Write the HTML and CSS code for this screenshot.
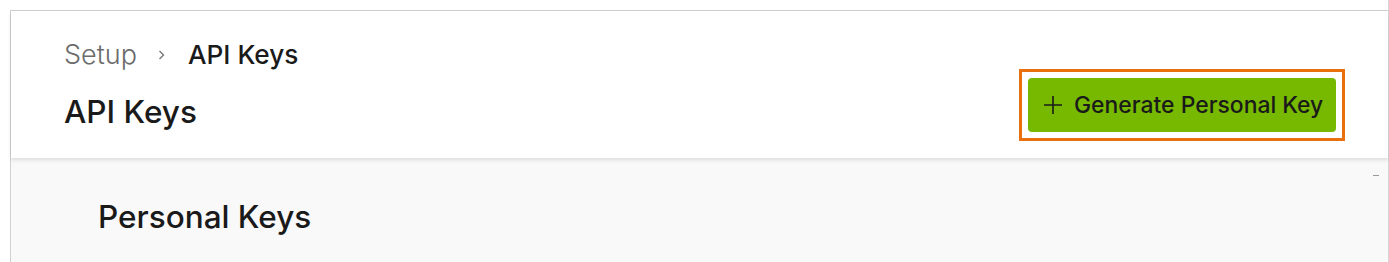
FILE: index.html
```html
<!DOCTYPE html>
<html>
<head>
<meta charset="utf-8">
<link rel="stylesheet" href="styles.css">
</head>
<body>
<div class="page">
  <div class="frame">
    <header class="header">
      <div class="titles">
        <nav class="crumbs">
          <span class="crumb">Setup</span>
          <svg class="chev" width="8" height="12" viewBox="0 0 8 12"><path d="M1.5 2l4 4-4 4" fill="none" stroke="#777" stroke-width="1.4"/></svg>
          <span class="crumb current">API Keys</span>
        </nav>
        <h1 class="title">API Keys</h1>
      </div>
      <div class="highlight">
        <button class="btn">
          <svg class="plus" width="18" height="18" viewBox="0 0 18 18"><path d="M9 0v18M0 9h18" stroke="#1a1a1a" stroke-width="1.6"/></svg>
          <span>Generate Personal Key</span>
        </button>
      </div>
    </header>
    <main class="content">
      <h2 class="section">Personal Keys</h2>
      <span class="mark"></span>
    </main>
  </div>
</div>
</body>
</html>
```
FILE: styles.css
```css
html, body { margin: 0; padding: 0; background: #fff; }
body { font-family: Inter, "Noto Sans", sans-serif; color: #1a1a1a; height: 262px; overflow: hidden; }
.page { padding-top: 10px; border-right: 1px solid #d4d4d4; height: 252px; }
.frame { border-top: 1px solid #d0d0d0; border-left: 1px solid #d0d0d0; margin-left: 10px; height: 251px; display: flex; flex-direction: column; background: #f9f9f9; }
.header { background: #fff; height: 147px; box-sizing: border-box; padding: 0 43px 0 53px; display: flex; justify-content: space-between; align-items: flex-start; box-shadow: 0 2px 4px rgba(0,0,0,0.12); position: relative; z-index: 1; }
.titles { padding-top: 28px; }
.crumbs { display: flex; align-items: center; height: 30px; }
.crumb { font-size: 27px; color: #6b6b6b; font-weight: 300; }
.chev { margin: 2px 22px 0 21px; }
.crumb.current { color: #1a1a1a; font-weight: 500; font-size: 26.2px; }
.title { margin: 24px 0 0; font-size: 31.5px; font-weight: 500; line-height: 38px; }
.highlight { margin-top: 58px; border: 3px solid #e8700f; padding: 6px; }
.btn { background: #76b900; border: 0; border-radius: 4px; height: 54px; width: 308px; display: flex; align-items: center; gap: 12px; padding: 0 0 0 16px; font-family: inherit; font-size: 22.9px; color: #1a1a1a; font-weight: 500; white-space: nowrap; }
.content { flex: 1; padding: 40px 0 0 87px; position: relative; }
.section { margin: 0; font-size: 31.5px; font-weight: 500; line-height: 38px; }
.mark { position: absolute; right: 9px; top: 17px; width: 6px; height: 1px; background: #999; }
```
